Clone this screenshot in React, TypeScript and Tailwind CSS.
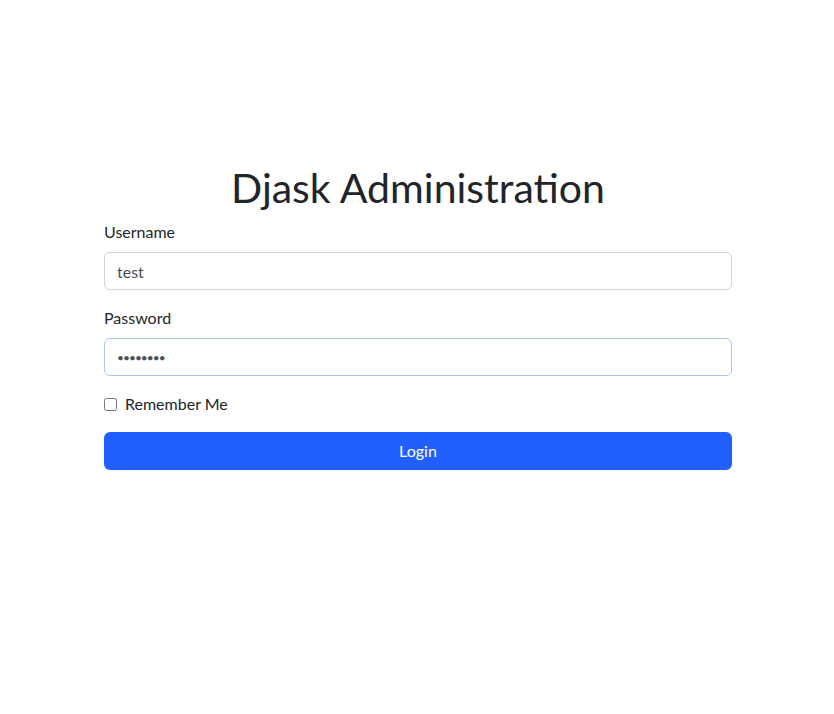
import { useState } from 'react';

const font = { fontFamily: 'Lato, "Noto Sans", sans-serif' };

export default function App() {
  const [username, setUsername] = useState('test');
  const [password, setPassword] = useState('password');
  const [remember, setRemember] = useState(false);

  return (
    <div className="min-h-[714px] bg-white pl-[104px] pr-[102px] pt-[164px] text-[#212529]" style={font}>
      <div className="w-full">
        <h1 className="mb-2 text-center text-[41px] leading-[48px] font-normal">Djask Administration</h1>
        <form onSubmit={(e) => e.preventDefault()}>
          <div className="mb-4">
            <label htmlFor="username" className="mb-2 block text-base leading-6">Username</label>
            <input
              id="username"
              className="block h-[38px] w-full rounded-[6px] border border-[#ced4da] px-3 text-base text-[#495057] outline-none"
              value={username}
              onChange={(e) => setUsername(e.target.value)}
            />
          </div>
          <div className="mb-4">
            <label htmlFor="password" className="mb-2 block text-base leading-6">Password</label>
            <input
              id="password"
              type="password"
              autoFocus
              className="block h-[38px] w-full rounded-[6px] border border-[#a9c6ef] px-3 text-[12px] tracking-[-1px] text-[#495057] caret-[#212529] outline-none"
              value={password}
              onChange={(e) => setPassword(e.target.value)}
            />
          </div>
          <div className="mb-4 flex h-6 items-center gap-2">
            <input
              id="remember"
              type="checkbox"
              className="m-0 h-[13px] w-[13px]"
              checked={remember}
              onChange={(e) => setRemember(e.target.checked)}
            />
            <label htmlFor="remember" className="text-base leading-6">Remember Me</label>
          </div>
          <button type="submit" className="block h-[38px] w-full rounded-[6px] bg-[#2160ff] text-base text-white">
            Login
          </button>
        </form>
      </div>
    </div>
  );
}
